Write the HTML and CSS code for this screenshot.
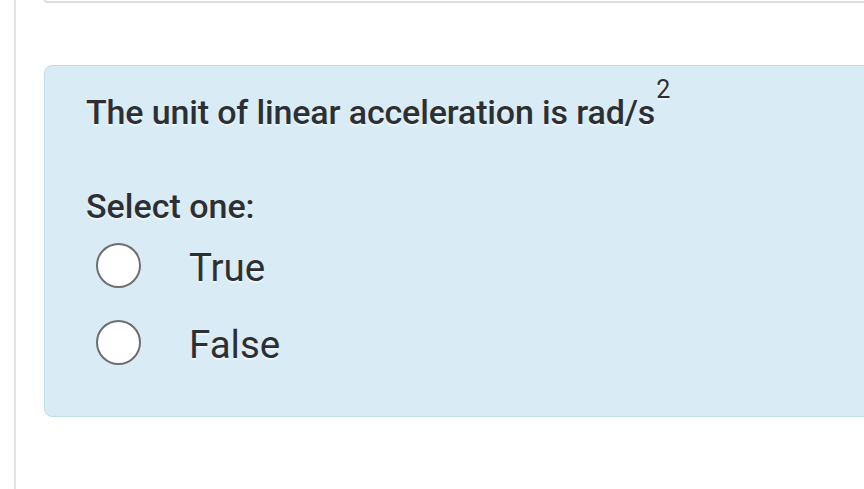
FILE: index.html
```html
<!DOCTYPE html>
<html>
<head>
<meta charset="utf-8">
<link rel="stylesheet" href="styles.css">
</head>
<body>
<div class="page">
  <div class="prev-card"></div>
  <div class="formulation">
    <div class="qtext">The unit of linear acceleration is rad/s<sup class="sup">2</sup></div>
    <div class="prompt">Select one:</div>
    <div class="answers">
      <label class="option"><span class="radio"></span><span class="label">True</span></label>
      <label class="option"><span class="radio"></span><span class="label">False</span></label>
    </div>
  </div>
</div>
</body>
</html>
```

FILE: styles.css
```css
html, body {
  margin: 0;
  padding: 0;
  background: #ffffff;
  overflow: hidden;
  height: 489px;
}
body {
  font-family: Roboto, "Noto Sans", "Liberation Sans", sans-serif;
  color: #2c3034;
}
.page {
  margin-left: 14px;
  border-left: 2px solid #e4e4e4;
  height: 489px;
  padding-left: 28px;
  box-sizing: border-box;
}
.prev-card {
  height: 1px;
  border: 2px solid #dedede;
  border-top: none;
  border-right: none;
  border-radius: 0 0 0 6px;
  margin-right: -20px;
}
.formulation {
  margin-top: 62px;
  margin-right: -30px;
  background: #d9ecf5;
  border: 1px solid #bcdfe9;
  border-radius: 8px;
  padding: 24px 0 42px 41px;
  height: 352px;
  box-sizing: border-box;
  text-shadow: 0 2px 1px rgba(255, 255, 255, 0.55);
}
.qtext {
  font-size: 34px;
  font-weight: 500;
  line-height: 40px;
  letter-spacing: -0.15px;
  white-space: nowrap;
}
.sup {
  font-size: 25px;
  font-weight: 400;
  line-height: 0;
  vertical-align: 26px;
  margin-left: 1px;
}
.prompt {
  margin-top: 54px;
  font-size: 34px;
  font-weight: 500;
  line-height: 40px;
}
.answers {
  margin-top: 9px;
  display: flex;
  flex-direction: column;
  gap: 17px;
  padding-left: 10px;
}
.option {
  display: flex;
  align-items: center;
  height: 60px;
}
.radio {
  width: 45px;
  height: 45px;
  box-sizing: border-box;
  border: 2.5px solid #6e6e6e;
  border-radius: 50%;
  background: #ffffff;
  flex: none;
}
.label {
  margin-left: 48px;
  font-size: 38.5px;
  padding-top: 4px;
}
```
